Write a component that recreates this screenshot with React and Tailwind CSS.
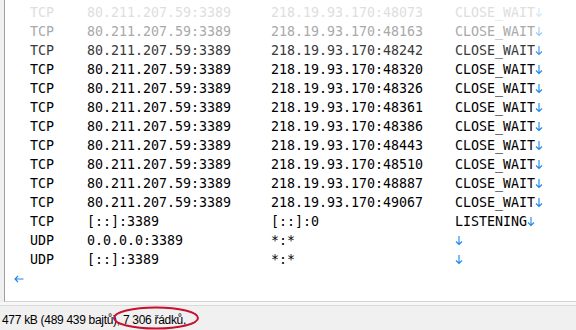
import React from "react";

const rows = [
  ["TCP", "80.211.207.59:3389", "218.19.93.170:48073", "CLOSE_WAIT", 0],
  ["TCP", "80.211.207.59:3389", "218.19.93.170:48163", "CLOSE_WAIT", 1],
  ["TCP", "80.211.207.59:3389", "218.19.93.170:48242", "CLOSE_WAIT", 2],
  ["TCP", "80.211.207.59:3389", "218.19.93.170:48320", "CLOSE_WAIT", 3],
  ["TCP", "80.211.207.59:3389", "218.19.93.170:48326", "CLOSE_WAIT", 3],
  ["TCP", "80.211.207.59:3389", "218.19.93.170:48361", "CLOSE_WAIT", 3],
  ["TCP", "80.211.207.59:3389", "218.19.93.170:48386", "CLOSE_WAIT", 3],
  ["TCP", "80.211.207.59:3389", "218.19.93.170:48443", "CLOSE_WAIT", 3],
  ["TCP", "80.211.207.59:3389", "218.19.93.170:48510", "CLOSE_WAIT", 3],
  ["TCP", "80.211.207.59:3389", "218.19.93.170:48887", "CLOSE_WAIT", 3],
  ["TCP", "80.211.207.59:3389", "218.19.93.170:49067", "CLOSE_WAIT", 3],
  ["TCP", "[::]:3389", "[::]:0", "LISTENING", 3],
  ["UDP", "0.0.0.0:3389", "*:*", "", 3],
  ["UDP", "[::]:3389", "*:*", "", 3],
];

const textCls = ["text-[#dedede]", "text-[#a9a9a9]", "text-[#3a3a3a]", "text-black"];
const arrowColor = ["#d2e6fb", "#9ccaf6", "#3d94ec", "#1a86ee"];

function Down({ color }) {
  return (
    <svg width="8" height="11" viewBox="0 0 8 11" className="inline-block">
      <path d="M4 1 V9.5 M1 6.5 L4 9.5 L7 6.5" fill="none" stroke={color} strokeWidth="1.1" />
    </svg>
  );
}

export default function App() {
  return (
    <div className="w-[576px] h-[330px] bg-[#f0f0f0] overflow-hidden relative">
      <div className="ml-[4px] h-[302px] bg-white border-l border-b border-[#a0a0a0] border-b-[#d4d4d4] pt-[3px] font-['DejaVu_Sans_Mono',monospace] text-[13.3px]">
        {rows.map(([p, a, b, s, f], i) => (
          <div key={i} className={`h-[19px] flex items-center whitespace-pre ${textCls[f]}`}>
            <div className="w-[82px] pl-[25px]">{p}</div>
            <div className="w-[184px]">{a}</div>
            <div className="w-[184px]">{b}</div>
            <div className="flex items-center">
              <span>{s}</span>
              <Down color={arrowColor[f]} />
            </div>
          </div>
        ))}
        <div className="h-[19px] flex items-center pl-[9px]">
          <svg width="10" height="8" viewBox="0 0 10 8">
            <path d="M9.5 4 H1 M4 1 L1 4 L4 7" fill="none" stroke="#1a86ee" strokeWidth="1.1" />
          </svg>
        </div>
      </div>
      <div className="h-[3px] bg-[#f7f7f7]" />
      <div className="h-[1px] bg-[#dadada]" />
      <div className="relative h-[24px] flex items-center pt-[4px] pl-[2px] font-['Liberation_Sans',sans-serif] text-[12px] tracking-[-0.3px] text-black">
        <span>477 kB (489 439 bajtů), 7 306 řádků,</span>
        <svg className="absolute left-[112px] top-[0px]" width="88" height="25" viewBox="0 0 88 25">
          <ellipse cx="44" cy="12" rx="42" ry="10.5" fill="none" stroke="#c8102e" strokeWidth="2" />
        </svg>
      </div>
    </div>
  );
}
